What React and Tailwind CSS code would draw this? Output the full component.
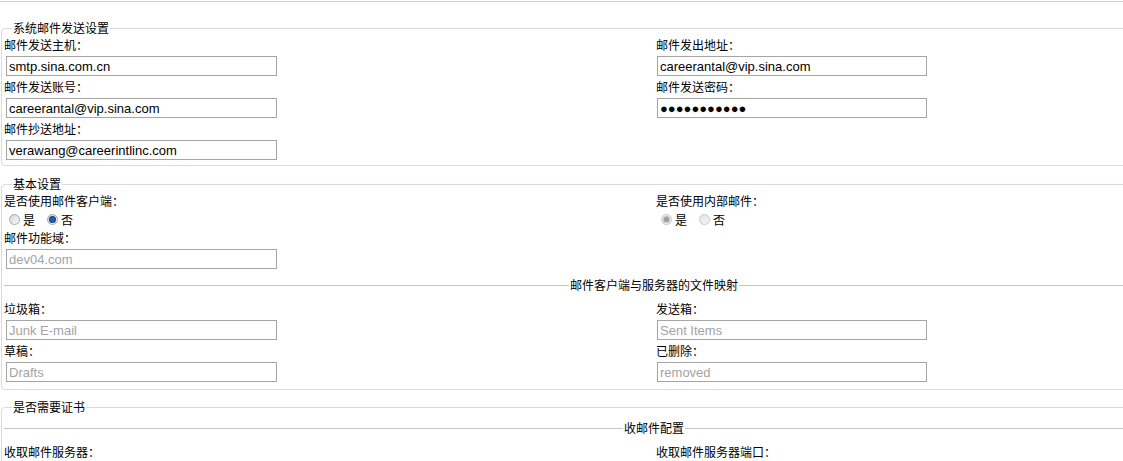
import React from 'react';

const cjk = "font-['Noto_Sans_CJK_SC','Noto_Sans_CJK_JP',sans-serif]";

const Label = ({ children }) => (
  <div className="h-[20px] leading-[20px] text-[12px] whitespace-nowrap">{children}</div>
);

const TextBox = ({ value, muted, right }) => (
  <div className="h-[22px] py-[1px]">
    <input
      type="text"
      readOnly
      defaultValue={value}
      className={`block h-[20px] border border-[#a5a5a5] px-[2px] font-['Liberation_Sans',Arial,sans-serif] text-[13px] leading-[18px] outline-none ${
        right ? 'ml-[1px] w-[270px]' : 'ml-[2px] w-[271px]'
      } ${muted ? 'text-[#a3a3a3]' : 'text-black'}`}
    />
  </div>
);

const Field = ({ label, ...rest }) => (
  <>
    <Label>{label}</Label>
    <TextBox {...rest} />
  </>
);

const Radio = ({ checked, disabled }) => (
  <span
    className={`flex h-[11px] w-[11px] items-center justify-center rounded-full border bg-linear-to-br ${
      disabled ? 'border-[#c8c8c8] from-[#e4e4e4] to-[#f6f6f6]' : 'border-[#a8a8a8] from-[#d6d6d6] to-[#fafafa]'
    }`}
  >
    {checked && (
      <span
        className={`h-[5px] w-[5px] rounded-full ${
          disabled ? 'bg-[#9c9c9c] ring-1 ring-[#bdbdbd]' : 'bg-[#1c62b0] ring-1 ring-[#0f3f78]'
        }`}
      />
    )}
  </span>
);

const YesNo = ({ value, disabled }) => (
  <div className="flex h-[17px] items-center pl-[5px] text-[12px]">
    <Radio checked={value === 'yes'} disabled={disabled} />
    <span className="ml-[3px]">是</span>
    <span className="ml-[12px]">
      <Radio checked={value === 'no'} disabled={disabled} />
    </span>
    <span className="ml-[3px]">否</span>
  </div>
);

// outer group box with legend on the left
const Group = ({ title, className = '', children }) => (
  <fieldset className={`ml-[1px] w-[1306px] rounded-[4px] border border-[#d5dde3] px-[2px] ${className}`}>
    <legend className="ml-[8px] px-[1px] text-[12px] leading-[14px]">{title}</legend>
    {children}
  </fieldset>
);

// inner section, only a top rule with the title centred
const Section = ({ title, className = '', children }) => (
  <fieldset className={`border-0 border-t border-[#c6c6c6] ${className}`}>
    <legend className="mx-auto px-[1px] text-[12px] leading-[14px]">{title}</legend>
    {children}
  </fieldset>
);

const Cols = ({ left, right }) => (
  <div className="grid grid-cols-[652px_1fr]">
    <div className="flex flex-col">{left}</div>
    <div className="flex flex-col">{right}</div>
  </div>
);

export default function App() {
  return (
    <div className={`h-[461px] w-[1123px] overflow-hidden bg-white text-black ${cjk}`}>
      <div className="w-[1307px]">
        <div className="mt-[1px] h-[1px] bg-[#d3d3d3]" />

        {/* 系统邮件发送设置 */}
        <Group title="系统邮件发送设置" className="mt-[19px] pb-[4px]">
          <Cols
            left={
              <>
                <Field label="邮件发送主机：" value="smtp.sina.com.cn" />
                <Field label="邮件发送账号：" value="careerantal@vip.sina.com" />
                <Field label="邮件抄送地址：" value="verawang@careerintlinc.com" />
              </>
            }
            right={
              <>
                <Field label="邮件发出地址：" value="careerantal@vip.sina.com" right />
                <Field label="邮件发送密码：" value="●●●●●●●●●●●" right />
              </>
            }
          />
        </Group>

        {/* 基本设置 */}
        <Group title="基本设置" className="mt-[11px] pb-[4px]">
          <Cols
            left={
              <>
                <Label>是否使用邮件客户端：</Label>
                <YesNo value="no" />
                <Field label="邮件功能域：" value="dev04.com" muted />
              </>
            }
            right={
              <>
                <Label>是否使用内部邮件：</Label>
                <YesNo value="yes" disabled />
              </>
            }
          />
          <Section title="邮件客户端与服务器的文件映射" className="mt-[8px] pt-[7px] pb-[2px]">
            <Cols
              left={
                <>
                  <Field label="垃圾箱：" value="Junk E-mail" muted />
                  <Field label="草稿：" value="Drafts" muted />
                </>
              }
              right={
                <>
                  <Field label="发送箱：" value="Sent Items" muted right />
                  <Field label="已删除：" value="removed" muted right />
                </>
              }
            />
          </Section>
        </Group>

        {/* 是否需要证书 */}
        <Group title="是否需要证书" className="mt-[10px] pb-[4px]">
          <Section title="收邮件配置" className="mt-[7px] pt-[7px]">
            <Cols
              left={<Label>收取邮件服务器：</Label>}
              right={<Label>收取邮件服务器端口：</Label>}
            />
          </Section>
        </Group>
      </div>
    </div>
  );
}
